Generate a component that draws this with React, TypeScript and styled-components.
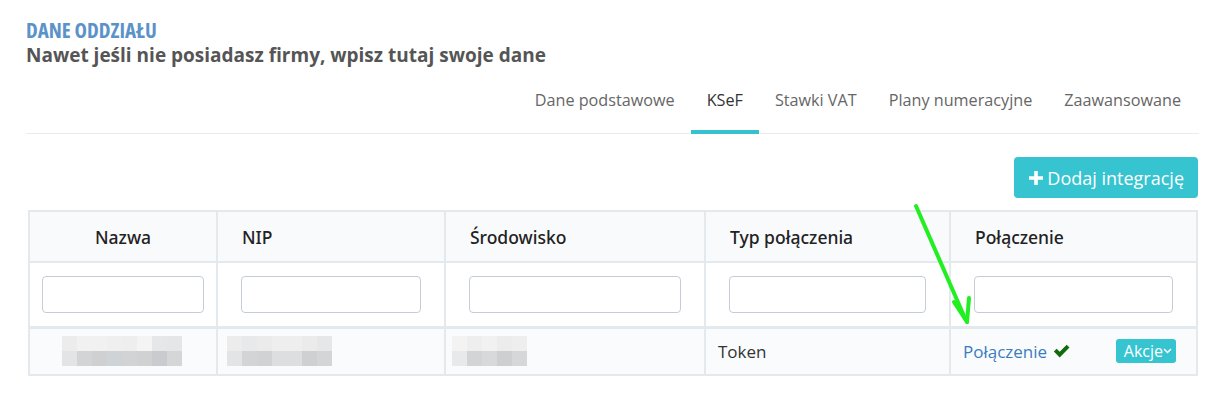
import React from "react";
import styled, { createGlobalStyle } from "styled-components";

const GlobalStyle = createGlobalStyle`
	html, body {
		margin: 0;
		padding: 0;
		background: #ffffff;
		font-family: "Open Sans", "Noto Sans", Arial, sans-serif;
	}
`;

const Page = styled.div`
	position: relative;
	width: 1173px;
	padding: 18px 0 0 26px;
`;

const Title = styled.div`
	font-size: 21px;
	font-weight: 700;
	font-stretch: 75%;
	line-height: 25px;
	color: #5b93c8;
`;

const Subtitle = styled.div`
	font-size: 19px;
	font-weight: 700;
	line-height: 24px;
	color: #555555;
`;

const TabBar = styled.div`
	display: flex;
	justify-content: flex-end;
	margin-top: 17px;
	padding-right: 2px;
	border-bottom: 1px solid #ececec;
`;

const Tab = styled.div<{ $active?: boolean }>`
	padding: 5px 16px 0;
	height: 41px;
	font-size: 16.2px;
	line-height: 22px;
	color: ${(p) => (p.$active ? "#333333" : "#666666")};
	border-bottom: 4px solid ${(p) => (p.$active ? "#35c1cf" : "transparent")};
	margin-bottom: -1px;
`;

const Toolbar = styled.div`
	display: flex;
	justify-content: flex-end;
	padding: 23px 1px 12px 0;
`;

const AddButton = styled.button`
	display: flex;
	align-items: center;
	gap: 4px;
	height: 41px;
	padding: 0 14px 0 15px;
	border: none;
	border-radius: 4px;
	background: #35c4d0;
	color: #ffffff;
	font-family: "Open Sans", sans-serif;
	font-size: 18px;
`;

const Table = styled.table`
	margin-left: 2px;
	width: 1168px;
	border-collapse: collapse;
	table-layout: fixed;
	border: 2px solid #e4e9ee;
`;

const HeadRow = styled.tr`
	background: #f9fafc;
	height: 51px;
`;

const Th = styled.th<{ $center?: boolean }>`
	border: 2px solid #e4e9ee;
	padding: 0 ${(p) => (p.$center ? "14px" : "24px")};
	text-align: ${(p) => (p.$center ? "center" : "left")};
	font-family: "Noto Sans", "Open Sans", sans-serif;
	font-size: 17.5px;
	font-weight: 500;
	color: #222222;
`;

const FilterRow = styled.tr`
	background: #ffffff;
	height: 65px;
`;

const FilterCell = styled.td<{ $narrow?: boolean }>`
	border: 2px solid #e4e9ee;
	border-bottom: 3px solid #e4e9ee;
	padding: 0 ${(p) => (p.$narrow ? "12px" : "23px")};
`;

const FilterInput = styled.input`
	display: block;
	box-sizing: border-box;
	width: 100%;
	height: 37px;
	border: 1px solid #c6ccd6;
	border-radius: 4px;
	background: #ffffff;
`;

const DataRow = styled.tr`
	background: #fafbfd;
	height: 48px;
`;

const Td = styled.td`
	border: 2px solid #e4e9ee;
	padding: 0 12px;
	font-size: 17px;
	color: #333333;
`;

const Mosaic = styled.div<{ $offset: number }>`
	display: inline-grid;
	grid-auto-flow: column;
	grid-template-rows: 15px 15px;
	grid-auto-columns: 15px;
	margin-left: ${(p) => p.$offset}px;
	vertical-align: middle;
`;

const Pixel = styled.div<{ $c: string }>`
	background: ${(p) => p.$c};
`;

const ConnectionCell = styled.div`
	display: flex;
	align-items: center;
	justify-content: space-between;
	padding-right: 8px;
`;

const ConnectionLink = styled.span`
	display: flex;
	align-items: center;
	gap: 6px;
	color: #3a7cbf;
	font-size: 17px;
`;

const ActionButton = styled.button`
	display: flex;
	align-items: center;
	height: 24px;
	padding: 0 4px 0 8px;
	border: none;
	border-radius: 3px;
	background: #35c4d0;
	color: #ffffff;
	font-family: "Open Sans", sans-serif;
	font-size: 16px;
`;

const Arrow = styled.svg`
	position: absolute;
	left: 900px;
	top: 200px;
	pointer-events: none;
`;

const mosaics: { offset: number; cells: string[] }[] = [
	{
		offset: 20,
		cells: [
			"#ececec", "#e3e4e5",
			"#f1f1f1", "#d3d4d6",
			"#f1f1f1", "#cfd0d1",
			"#efefef", "#cdd3d6",
			"#eeeeee", "#d2d3d5",
			"#f4f4f4", "#d0d1d3",
			"#e6e7e8", "#c9cbce",
			"#e4e6e8", "#d4d6d8",
		],
	},
	{
		offset: -3,
		cells: [
			"#ececec", "#e3e4e5",
			"#e8e9ea", "#d3d4d6",
			"#ebebeb", "#d1d2d4",
			"#eeeeee", "#dcdedf",
			"#eeeeee", "#dcdee0",
			"#ebebec", "#cfd0d2",
			"#e6e7e8", "#d4d5d7",
		],
	},
	{
		offset: -6,
		cells: [
			"#f3f3f3", "#e9e9ea",
			"#eeeeee", "#d3d4d6",
			"#f1f1f1", "#d8d9db",
			"#ececec", "#cdcfd1",
			"#eeeeee", "#d6d7d9",
		],
	},
];

const tabs = ["Dane podstawowe", "KSeF", "Stawki VAT", "Plany numeracyjne", "Zaawansowane"];

export default function App() {
	return (
		<>
			<GlobalStyle />
			<Page>
				<Title>DANE ODDZIAŁU</Title>
				<Subtitle>Nawet jeśli nie posiadasz firmy, wpisz tutaj swoje dane</Subtitle>
				<TabBar>
					{tabs.map((t) => (
						<Tab key={t} $active={t === "KSeF"}>
							{t}
						</Tab>
					))}
				</TabBar>
				<Toolbar>
					<AddButton>
						<svg width="14" height="14" viewBox="0 0 14 14">
							<path d="M5.2 0h3.6v5.2H14v3.6H8.8V14H5.2V8.8H0V5.2h5.2z" fill="#fff" />
						</svg>
						Dodaj integrację
					</AddButton>
				</Toolbar>
				<Table>
					<colgroup>
						<col style={{ width: 188 }} />
						<col style={{ width: 228 }} />
						<col style={{ width: 260 }} />
						<col style={{ width: 245 }} />
						<col style={{ width: 247 }} />
					</colgroup>
					<thead>
						<HeadRow>
							<Th $center>Nazwa</Th>
							<Th>NIP</Th>
							<Th>Środowisko</Th>
							<Th>Typ połączenia</Th>
							<Th>Połączenie</Th>
						</HeadRow>
						<FilterRow>
							<FilterCell $narrow>
								<FilterInput />
							</FilterCell>
							<FilterCell>
								<FilterInput />
							</FilterCell>
							<FilterCell>
								<FilterInput />
							</FilterCell>
							<FilterCell>
								<FilterInput />
							</FilterCell>
							<FilterCell>
								<FilterInput />
							</FilterCell>
						</FilterRow>
					</thead>
					<tbody>
						<DataRow>
							{mosaics.map((m, i) => (
								<Td key={i}>
									<Mosaic $offset={m.offset}>
										{m.cells.map((c, j) => (
											<Pixel key={j} $c={c} />
										))}
									</Mosaic>
								</Td>
							))}
							<Td>Token</Td>
							<Td>
								<ConnectionCell>
									<ConnectionLink>
										Połączenie
										<svg width="17" height="14" viewBox="0 0 16 13">
											<path d="M0.8 7l2.6-2.6 2.9 2.9L12.9 0.7 15.5 3.3 6.3 12.5z" fill="#0f6b0c" />
										</svg>
									</ConnectionLink>
									<ActionButton>
										Akcje
										<svg width="9" height="6" viewBox="0 0 9 6">
											<path d="M1 1l3.5 3.5L8 1" stroke="#fff" strokeWidth="1.5" fill="none" />
										</svg>
									</ActionButton>
								</ConnectionCell>
							</Td>
						</DataRow>
					</tbody>
				</Table>
				<Arrow width="80" height="130" viewBox="0 0 80 130">
					<line x1="16" y1="6" x2="64" y2="116" stroke="#22ee22" strokeWidth="4" strokeLinecap="round" />
					<line x1="67" y1="122" x2="54" y2="102" stroke="#22ee22" strokeWidth="4" strokeLinecap="round" />
					<line x1="67" y1="122" x2="69" y2="98" stroke="#22ee22" strokeWidth="4" strokeLinecap="round" />
				</Arrow>
			</Page>
		</>
	);
}
